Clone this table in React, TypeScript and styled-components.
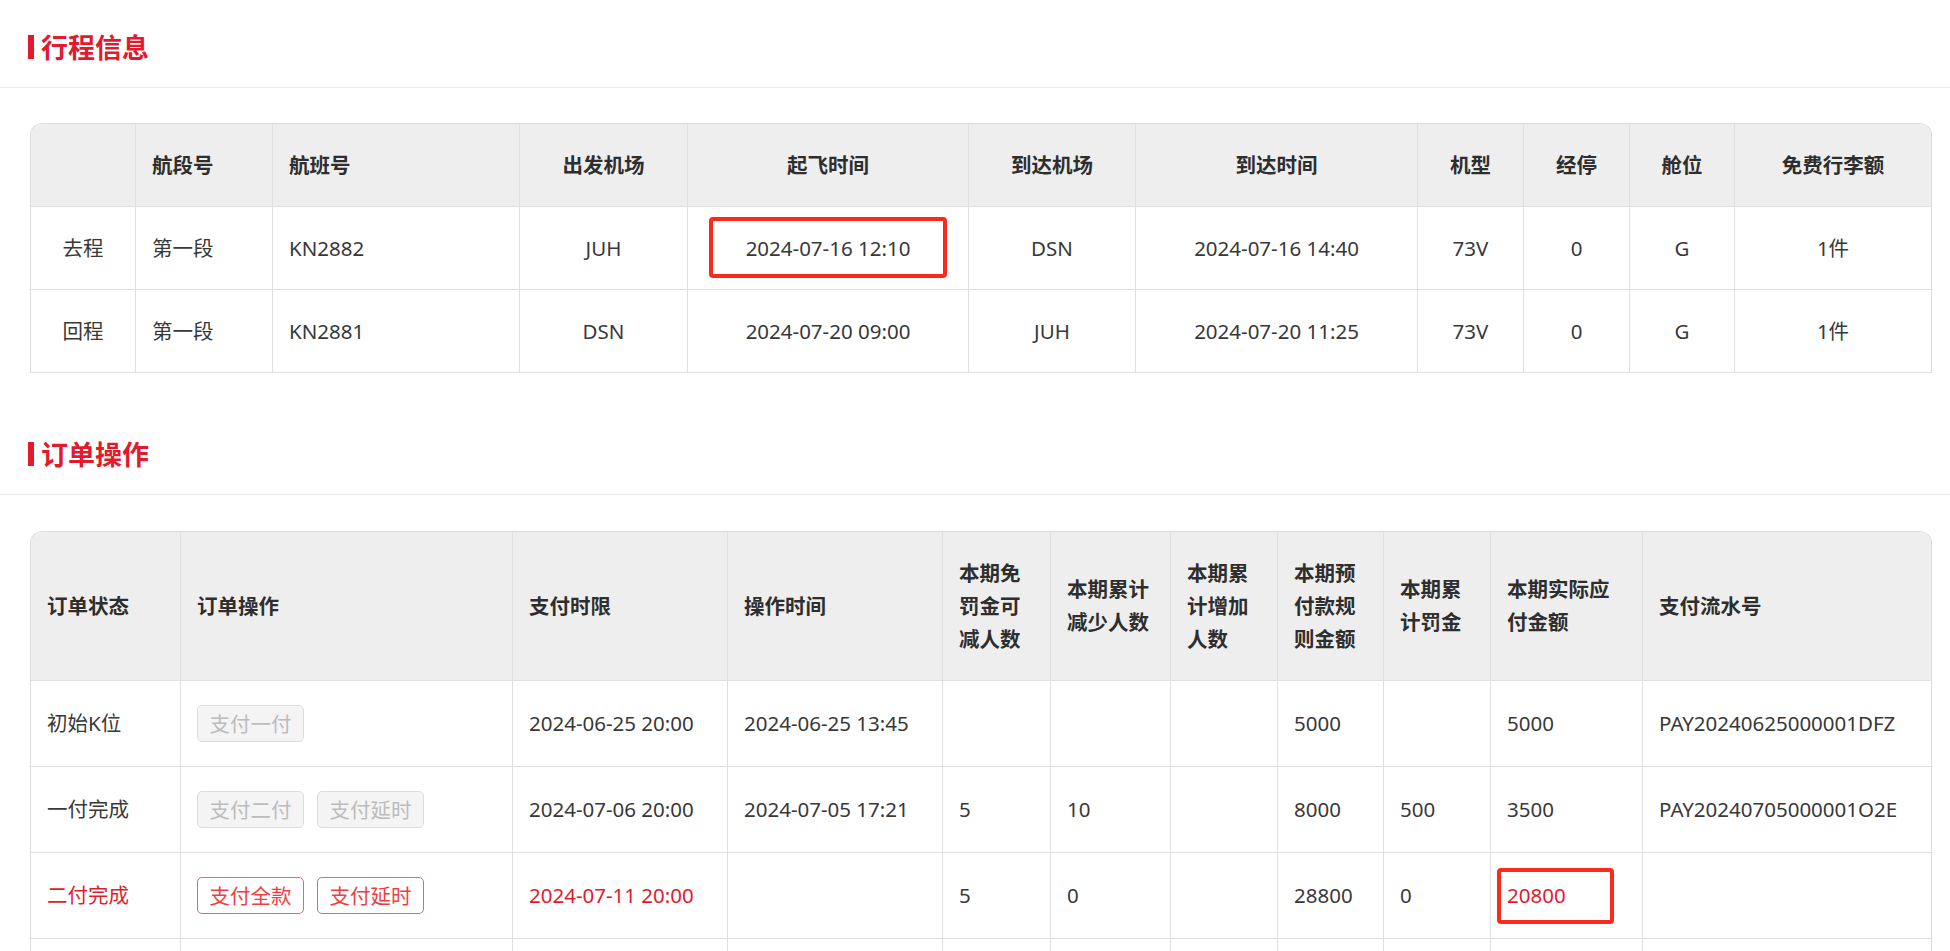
import React from "react";
import styled, { createGlobalStyle, css } from "styled-components";

const GlobalStyle = createGlobalStyle`
  html, body {
    margin: 0;
    padding: 0;
    background: #ffffff;
  }
  body {
    font-family: "Noto Sans", "Noto Sans CJK SC", sans-serif;
    color: #333333;
  }
  * { box-sizing: border-box; }
`;

const RED = "#e21a2e";

const Page = styled.div`
  width: 1950px;
  display: flex;
  flex-direction: column;
`;

const Section = styled.section`
  display: flex;
  flex-direction: column;
`;

const SectionHeader = styled.header`
  height: 88px;
  padding: 7px 0 0 28px;
  display: flex;
  align-items: center;
  border-bottom: 1px solid #ebebeb;
`;

const Bar = styled.span`
  width: 6px;
  height: 24px;
  background: ${RED};
  margin-right: 7px;
`;

const Title = styled.h2`
  margin: 0;
  font-family: "Noto Sans CJK SC", sans-serif;
  font-size: 27px;
  line-height: 36px;
  font-weight: 700;
  color: ${RED};
`;

const SectionBody = styled.div<{ $top: number; $bottom: number }>`
  padding: ${(p) => p.$top}px 18px ${(p) => p.$bottom}px 30px;
`;

const TableFrame = styled.div`
  border: 1px solid #dcdcdc;
  border-bottom: 0;
  border-radius: 12px 12px 0 0;
  overflow: hidden;
  display: flex;
  flex-direction: column;
`;

const Row = styled.div<{ $cols: string; $height: number; $head?: boolean }>`
  display: grid;
  grid-template-columns: ${(p) => p.$cols};
  height: ${(p) => p.$height}px;
  ${(p) =>
    p.$head &&
    css`
      background: #eeeeee;
    `}
`;

const Cell = styled.div<{ $center?: boolean; $red?: boolean; $head?: boolean }>`
  position: relative;
  display: flex;
  align-items: center;
  justify-content: ${(p) => (p.$center ? "center" : "flex-start")};
  text-align: ${(p) => (p.$center ? "center" : "left")};
  padding: 0 16px;
  border-right: 1px solid #dfdfdf;
  border-bottom: 1px solid #dfdfdf;
  font-size: 20.5px;
  line-height: 33px;
  font-weight: ${(p) => (p.$head ? 700 : 400)};
  color: ${(p) => (p.$red ? RED : p.$head ? "#2e2e2e" : "#383838")};
  white-space: ${(p) => (p.$head ? "normal" : "nowrap")};
  word-break: break-all;
  &:last-child {
    border-right: 0;
  }
`;

const ButtonGroup = styled.div`
  display: flex;
  gap: 13px;
`;

const ActionButton = styled.button<{ $active?: boolean }>`
  height: 37px;
  width: 107px;
  padding: 0;
  border-radius: 5px;
  font-family: "Noto Sans CJK SC", sans-serif;
  font-size: 20.5px;
  line-height: 35px;
  cursor: pointer;
  ${(p) =>
    p.$active
      ? css`
          background: #ffffff;
          border: 1px solid #f26262;
          color: #ee3e42;
        `
      : css`
          background: #f4f4f4;
          border: 1px solid #dcdcdc;
          color: #bcbcbc;
        `}
`;

const Mark = styled.span<{ $t: number; $r: number; $b: number; $l: number }>`
  position: absolute;
  top: ${(p) => p.$t}px;
  right: ${(p) => p.$r}px;
  bottom: ${(p) => p.$b}px;
  left: ${(p) => p.$l}px;
  border: 4px solid #fa2a1e;
  border-radius: 4px;
  pointer-events: none;
`;

/* ---------- data ---------- */

const TRIP_COLS =
  "105px 137px 247px 168px 281px 167px 282px 106px 106px 105px 196px";
const TRIP_HEAD = [
  "",
  "航段号",
  "航班号",
  "出发机场",
  "起飞时间",
  "到达机场",
  "到达时间",
  "机型",
  "经停",
  "舱位",
  "免费行李额",
];
const TRIP_LEFT = new Set([1, 2]);
const TRIP_ROWS = [
  ["去程", "第一段", "KN2882", "JUH", "2024-07-16 12:10", "DSN", "2024-07-16 14:40", "73V", "0", "G", "1件"],
  ["回程", "第一段", "KN2881", "DSN", "2024-07-20 09:00", "JUH", "2024-07-20 11:25", "73V", "0", "G", "1件"],
];

const ORDER_COLS =
  "150px 332px 215px 215px 108px 120px 107px 106px 107px 152px 288px";
const ORDER_HEAD = [
  "订单状态",
  "订单操作",
  "支付时限",
  "操作时间",
  "本期免罚金可减人数",
  "本期累计减少人数",
  "本期累计增加人数",
  "本期预付款规则金额",
  "本期累计罚金",
  "本期实际应付金额",
  "支付流水号",
];

type OrderRow = {
  status: string;
  buttons: string[];
  active?: boolean;
  deadline: string;
  opTime: string;
  free: string;
  dec: string;
  inc: string;
  pre: string;
  fine: string;
  pay: string;
  serial: string;
};

const ORDER_ROWS: OrderRow[] = [
  {
    status: "初始K位",
    buttons: ["支付一付"],
    deadline: "2024-06-25 20:00",
    opTime: "2024-06-25 13:45",
    free: "",
    dec: "",
    inc: "",
    pre: "5000",
    fine: "",
    pay: "5000",
    serial: "PAY20240625000001DFZ",
  },
  {
    status: "一付完成",
    buttons: ["支付二付", "支付延时"],
    deadline: "2024-07-06 20:00",
    opTime: "2024-07-05 17:21",
    free: "5",
    dec: "10",
    inc: "",
    pre: "8000",
    fine: "500",
    pay: "3500",
    serial: "PAY20240705000001O2E",
  },
  {
    status: "二付完成",
    buttons: ["支付全款", "支付延时"],
    active: true,
    deadline: "2024-07-11 20:00",
    opTime: "",
    free: "5",
    dec: "0",
    inc: "",
    pre: "28800",
    fine: "0",
    pay: "20800",
    serial: "",
  },
];

function SectionTitle({ text }: { text: string }) {
  return (
    <SectionHeader>
      <Bar />
      <Title>{text}</Title>
    </SectionHeader>
  );
}

function TripTable() {
  return (
    <TableFrame>
      <Row $cols={TRIP_COLS} $height={83} $head>
        {TRIP_HEAD.map((h, i) => (
          <Cell key={i} $head $center={!TRIP_LEFT.has(i)}>
            {h}
          </Cell>
        ))}
      </Row>
      {TRIP_ROWS.map((r, ri) => (
        <Row key={ri} $cols={TRIP_COLS} $height={83}>
          {r.map((v, i) => (
            <Cell key={i} $center={!TRIP_LEFT.has(i)}>
              {v}
              {ri === 0 && i === 4 && <Mark $t={10} $r={21} $b={11} $l={21} />}
            </Cell>
          ))}
        </Row>
      ))}
    </TableFrame>
  );
}

function OrderTable() {
  return (
    <TableFrame>
      <Row $cols={ORDER_COLS} $height={149} $head>
        {ORDER_HEAD.map((h, i) => (
          <Cell key={i} $head>
            {h}
          </Cell>
        ))}
      </Row>
      {ORDER_ROWS.map((r, ri) => (
        <Row key={ri} $cols={ORDER_COLS} $height={86}>
          <Cell $red={r.active}>{r.status}</Cell>
          <Cell>
            <ButtonGroup>
              {r.buttons.map((b) => (
                <ActionButton key={b} $active={r.active}>
                  {b}
                </ActionButton>
              ))}
            </ButtonGroup>
          </Cell>
          <Cell $red={r.active}>{r.deadline}</Cell>
          <Cell>{r.opTime}</Cell>
          <Cell>{r.free}</Cell>
          <Cell>{r.dec}</Cell>
          <Cell>{r.inc}</Cell>
          <Cell>{r.pre}</Cell>
          <Cell>{r.fine}</Cell>
          <Cell $red={r.active}>
            {r.pay}
            {r.active && <Mark $t={15} $r={28} $b={14} $l={6} />}
          </Cell>
          <Cell>{r.serial}</Cell>
        </Row>
      ))}
      <Row $cols={ORDER_COLS} $height={86}>
        {ORDER_HEAD.map((_, i) => (
          <Cell key={i} />
        ))}
      </Row>
    </TableFrame>
  );
}

export default function App() {
  return (
    <>
      <GlobalStyle />
      <Page>
        <Section>
          <SectionTitle text="行程信息" />
          <SectionBody $top={35} $bottom={34}>
            <TripTable />
          </SectionBody>
        </Section>
        <Section>
          <SectionTitle text="订单操作" />
          <SectionBody $top={36} $bottom={34}>
            <OrderTable />
          </SectionBody>
        </Section>
      </Page>
    </>
  );
}
